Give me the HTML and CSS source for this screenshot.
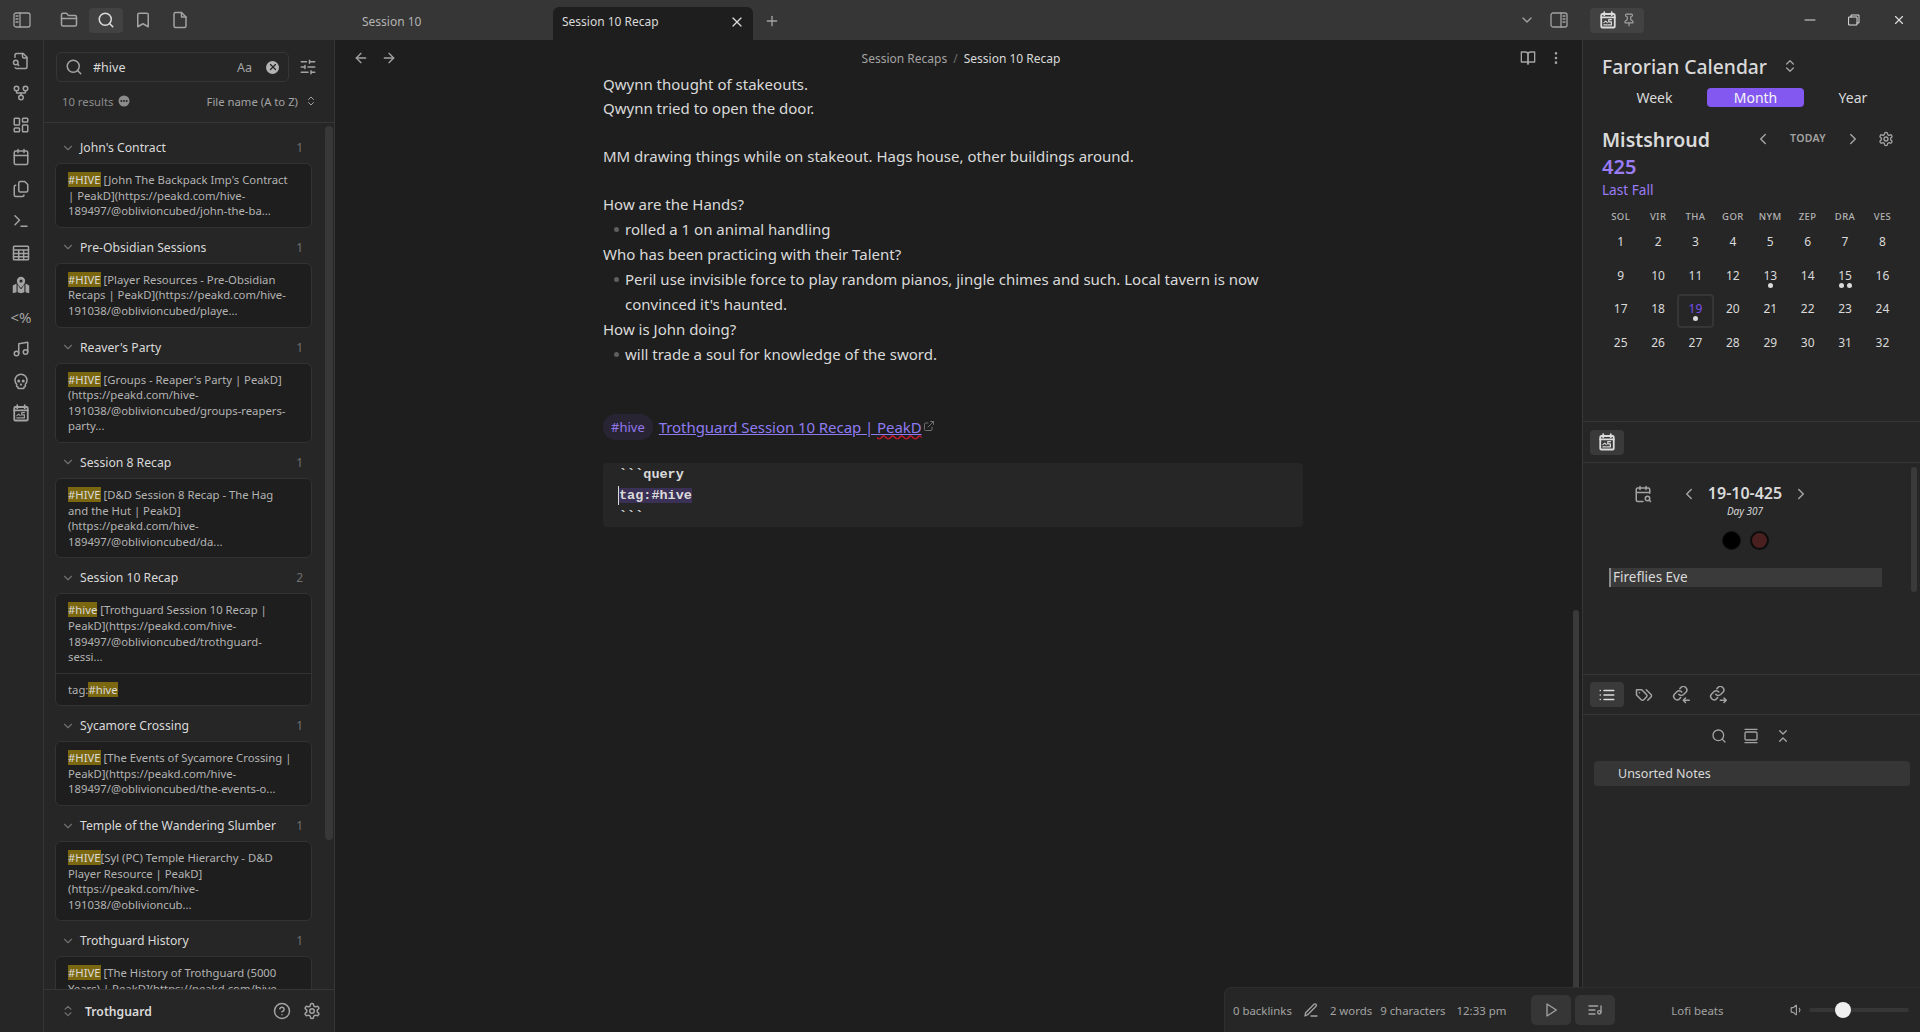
FILE: index.html
```html
<!DOCTYPE html>
<html lang="en">
<head>
<meta charset="utf-8">
<title>Session 10 Recap - Trothguard</title>
<link rel="stylesheet" href="styles.css">
</head>
<body>
<svg class="defs" aria-hidden="true">
  <symbol id="i-side-left" viewBox="0 0 18 18"><rect x="1" y="2" width="16" height="14" rx="2"/><path d="M7 2v14M3 5h2M3 8h2M3 11h2"/></symbol>
  <symbol id="i-side-right" viewBox="0 0 18 18"><rect x="1" y="2" width="16" height="14" rx="2"/><path d="M11 2v14M13 5h2M13 8h2M13 11h2"/></symbol>
  <symbol id="i-folder" viewBox="0 0 24 24"><path d="M20 20a2 2 0 0 0 2-2V8a2 2 0 0 0-2-2h-7.9a2 2 0 0 1-1.69-.9L9.6 3.9A2 2 0 0 0 7.93 3H4a2 2 0 0 0-2 2v13a2 2 0 0 0 2 2Z"/><path d="M2 10h20"/></symbol>
  <symbol id="i-search" viewBox="0 0 24 24"><circle cx="11" cy="11" r="8"/><path d="m21 21-4.3-4.3"/></symbol>
  <symbol id="i-bookmark" viewBox="0 0 24 24"><path d="m19 21-7-4-7 4V5a2 2 0 0 1 2-2h10a2 2 0 0 1 2 2v16z"/></symbol>
  <symbol id="i-file" viewBox="0 0 24 24"><path d="M14 2H6a2 2 0 0 0-2 2v16a2 2 0 0 0 2 2h12a2 2 0 0 0 2-2V8z"/><path d="M14 2v6h6"/></symbol>
  <symbol id="i-file-search" viewBox="0 0 24 24"><path d="M14 2v4a2 2 0 0 0 2 2h4"/><path d="M4.3 21a2 2 0 0 0 1.7 1H18a2 2 0 0 0 2-2V7l-5-5H6a2 2 0 0 0-2 2v3"/><path d="m9 18-1.5-1.5"/><circle cx="5" cy="14" r="3"/></symbol>
  <symbol id="i-fork" viewBox="0 0 24 24"><circle cx="12" cy="18" r="3"/><circle cx="6" cy="6" r="3"/><circle cx="18" cy="6" r="3"/><path d="M18 9v2c0 .6-.4 1-1 1H7c-.6 0-1-.4-1-1V9"/><path d="M12 12v3"/></symbol>
  <symbol id="i-dash" viewBox="0 0 24 24"><rect x="3" y="3" width="7" height="9" rx="1"/><rect x="14" y="3" width="7" height="5" rx="1"/><rect x="14" y="12" width="7" height="9" rx="1"/><rect x="3" y="16" width="7" height="5" rx="1"/></symbol>
  <symbol id="i-calendar" viewBox="0 0 24 24"><path d="M8 2v4M16 2v4"/><rect x="3" y="4" width="18" height="18" rx="2"/><path d="M3 10h18"/></symbol>
  <symbol id="i-copy" viewBox="0 0 24 24"><path d="M9 4a2 2 0 0 1 2-2h6l4 4v8a2 2 0 0 1-2 2h-8a2 2 0 0 1-2-2Z"/><path d="M5 7a2 2 0 0 0-2 2v11a2 2 0 0 0 2 2h9a2 2 0 0 0 2-2"/></symbol>
  <symbol id="i-terminal" viewBox="0 0 24 24"><path d="m4 17 6-6-6-6"/><path d="M12 19h8"/></symbol>
  <symbol id="i-table" viewBox="0 0 24 24"><rect x="2" y="3" width="20" height="18" rx="1"/><path d="M2 8h20M2 12.500h20M2 17h20M9 8v13M15.500 8v13"/></symbol>
  <symbol id="i-map" viewBox="0 0 24 24"><path class="solid" d="M1 12.500l5-2.500v11.500l-5 1.500zM7.500 11l3.500 6h2l3.500-6 0 10.500-4.500 1.500-4.500-1.500zM18 10l5 2.500V23l-5-1.500z"/><path class="solid" fill-rule="evenodd" d="M12 1a5.500 5.500 0 0 1 5.500 5.500c0 3-2.500 6-5.500 9.500-3-3.500-5.500-6.500-5.500-9.500A5.500 5.500 0 0 1 12 1zm0 3.500a2 2 0 1 0 0 4 2 2 0 0 0 0-4z"/></symbol>
  <symbol id="i-music" viewBox="0 0 24 24"><path d="M9 18V5l12-2v13"/><circle cx="6" cy="18" r="3"/><circle cx="18" cy="16" r="3"/></symbol>
  <symbol id="i-skull" viewBox="0 0 24 24"><path d="m12.500 17-.5-1-.5 1h1z"/><path d="M15 22a1 1 0 0 0 1-1v-1a2 2 0 0 0 1.560-3.250 8 8 0 1 0-11.120 0A2 2 0 0 0 8 20v1a1 1 0 0 0 1 1z"/><circle cx="15" cy="12" r="1"/><circle cx="9" cy="12" r="1"/></symbol>
  <symbol id="i-cal-s" viewBox="0 0 24 24"><path class="thick" d="M7 1.500v4M17 1.500v4"/><rect class="thick" x="3" y="4" width="18" height="18" rx="1.500"/><path class="thick" d="M3 8.500h18"/><path class="thin" d="M16.500 11.500h-3.500v3h3.500v4H12M6.500 15.500l2.500-2 2 2M6.500 18.500h4"/></symbol>
  <symbol id="i-sliders" viewBox="0 0 24 24"><path d="M21 5h-7M10 5H3M21 12h-9M8 12H3M21 19h-5M12 19H3M14 3v4M8 10v4M16 17v4"/></symbol>
  <symbol id="i-updown" viewBox="0 0 24 24"><path d="m7 15 5 5 5-5"/><path d="m7 9 5-5 5 5"/></symbol>
  <symbol id="i-down" viewBox="0 0 24 24"><path d="m6 9 6 6 6-6"/></symbol>
  <symbol id="i-left" viewBox="0 0 24 24"><path d="m15 18-6-6 6-6"/></symbol>
  <symbol id="i-right" viewBox="0 0 24 24"><path d="m9 18 6-6-6-6"/></symbol>
  <symbol id="i-arrow-left" viewBox="0 0 24 24"><path d="m12 19-7-7 7-7"/><path d="M19 12H5"/></symbol>
  <symbol id="i-arrow-right" viewBox="0 0 24 24"><path d="M5 12h14"/><path d="m12 5 7 7-7 7"/></symbol>
  <symbol id="i-x" viewBox="0 0 24 24"><path d="M18 6 6 18"/><path d="m6 6 12 12"/></symbol>
  <symbol id="i-plus" viewBox="0 0 24 24"><path d="M5 12h14"/><path d="M12 5v14"/></symbol>
  <symbol id="i-gear" viewBox="0 0 24 24"><path d="M12.220 2h-.44a2 2 0 0 0-2 2v.18a2 2 0 0 1-1 1.730l-.43.25a2 2 0 0 1-2 0l-.15-.08a2 2 0 0 0-2.730.73l-.22.38a2 2 0 0 0 .73 2.730l.15.1a2 2 0 0 1 1 1.720v.51a2 2 0 0 1-1 1.740l-.15.09a2 2 0 0 0-.73 2.730l.22.38a2 2 0 0 0 2.730.73l.15-.08a2 2 0 0 1 2 0l.43.25a2 2 0 0 1 1 1.730V20a2 2 0 0 0 2 2h.44a2 2 0 0 0 2-2v-.18a2 2 0 0 1 1-1.730l.43-.25a2 2 0 0 1 2 0l.15.08a2 2 0 0 0 2.730-.73l.22-.39a2 2 0 0 0-.73-2.730l-.15-.08a2 2 0 0 1-1-1.740v-.5a2 2 0 0 1 1-1.740l.15-.09a2 2 0 0 0 .73-2.730l-.22-.38a2 2 0 0 0-2.730-.73l-.15.08a2 2 0 0 1-2 0l-.43-.25a2 2 0 0 1-1-1.730V4a2 2 0 0 0-2-2z"/><circle cx="12" cy="12" r="3"/></symbol>
  <symbol id="i-help" viewBox="0 0 24 24"><circle cx="12" cy="12" r="10"/><path d="M9.090 9a3 3 0 0 1 5.830 1c0 2-3 3-3 3"/><path d="M12 17h.01"/></symbol>
  <symbol id="i-book" viewBox="0 0 24 24"><path d="M2 3h6a4 4 0 0 1 4 4v14a3 3 0 0 0-3-3H2z"/><path d="M22 3h-6a4 4 0 0 0-4 4v14a3 3 0 0 1 3-3h7z"/></symbol>
  <symbol id="i-more" viewBox="0 0 24 24"><circle cx="12" cy="12" r="1"/><circle cx="12" cy="5" r="1"/><circle cx="12" cy="19" r="1"/></symbol>
  <symbol id="i-pin" viewBox="0 0 24 24"><path d="M12 17v5"/><path d="M9 10.760a2 2 0 0 1-1.110 1.790l-1.780.9A2 2 0 0 0 5 15.240V16a1 1 0 0 0 1 1h12a1 1 0 0 0 1-1v-.76a2 2 0 0 0-1.110-1.790l-1.780-.9A2 2 0 0 1 15 10.760V7a1 1 0 0 1 1-1 2 2 0 0 0 0-4H8a2 2 0 0 0 0 4 1 1 0 0 1 1 1z"/></symbol>
  <symbol id="i-external" viewBox="0 0 24 24"><path d="M18 14v5a2 2 0 0 1-2 2H5a2 2 0 0 1-2-2V8a2 2 0 0 1 2-2h5"/><path d="M15 3h6v6"/><path d="M10 14 21 3"/></symbol>
  <symbol id="i-cal-search" viewBox="0 0 24 24"><path d="M8 2v4M16 2v4M21 11V6a2 2 0 0 0-2-2H5a2 2 0 0 0-2 2v14a2 2 0 0 0 2 2h7M3 10h18"/><circle cx="18" cy="18" r="3"/><path d="m22 22-1.800-1.800"/></symbol>
  <symbol id="i-list" viewBox="0 0 24 24"><path d="M8 6h13M8 12h13M8 18h13M3 6h.01M3 12h.01M3 18h.01"/></symbol>
  <symbol id="i-tags" viewBox="0 0 24 24"><path d="M9 5H2v7l6.290 6.290c.94.94 2.480.94 3.420 0l3.580-3.580c.94-.94.94-2.480 0-3.420L9 5Z"/><path d="M6 9.010V9"/><path d="m15 5 6.300 6.300a2.400 2.400 0 0 1 0 3.400L17 19"/></symbol>
  <symbol id="i-link-in" viewBox="0 0 24 24"><path d="M9 11a4.500 4.500 0 0 0 6.500.4l3-3a4.600 4.600 0 0 0-6.500-6.500L10.500 3.500"/><path d="M13 8a4.500 4.500 0 0 0-6.500-.4l-3 3a4.600 4.600 0 0 0 6.500 6.500L11.500 15.500"/><path d="M23 19h-8M18 16l-3 3 3 3"/></symbol>
  <symbol id="i-link-out" viewBox="0 0 24 24"><path d="M9 11a4.500 4.500 0 0 0 6.500.4l3-3a4.600 4.600 0 0 0-6.500-6.500L10.500 3.500"/><path d="M13 8a4.500 4.500 0 0 0-6.500-.4l-3 3a4.600 4.600 0 0 0 6.500 6.500L11.500 15.500"/><path d="M15 19h8M20 16l3 3-3 3"/></symbol>
  <symbol id="i-gallery" viewBox="0 0 24 24"><rect x="3" y="6" width="18" height="12" rx="2"/><path d="M3 2h18M3 22h18"/></symbol>
  <symbol id="i-collapse" viewBox="0 0 24 24"><path d="m7 20 5-5 5 5"/><path d="m7 4 5 5 5-5"/></symbol>
  <symbol id="i-pen" viewBox="0 0 24 24"><path d="M12 21h9"/><path d="M16.500 3.500a2.120 2.120 0 0 1 3 3L7 19l-4 2 1-5Z"/></symbol>
  <symbol id="i-play" viewBox="0 0 24 24"><polygon points="6 3 20 12 6 21 6 3"/></symbol>
  <symbol id="i-list-music" viewBox="0 0 24 24"><path d="M21 15V6"/><circle cx="18.500" cy="15.500" r="2.500"/><path d="M12 12H3M16 6H3M12 18H3"/></symbol>
  <symbol id="i-volume" viewBox="0 0 24 24"><path d="M11 4.700a.7.7 0 0 0-1.200-.5L6.400 7.600A1.400 1.400 0 0 1 5.400 8H3a1 1 0 0 0-1 1v6a1 1 0 0 0 1 1h2.400a1.400 1.400 0 0 1 1 .4l3.400 3.400a.7.7 0 0 0 1.200-.5z"/><path d="M16 9a5 5 0 0 1 0 6"/></symbol>
  <symbol id="i-min" viewBox="0 0 24 24"><path d="M2 12h20"/></symbol>
  <symbol id="i-restore" viewBox="0 0 12 12"><rect x="1" y="3" width="8" height="8"/><path d="M3 3V1h8v8H9"/></symbol>
  <symbol id="i-dots-badge" viewBox="0 0 12 12"><circle class="badge-fill" cx="6" cy="6" r="5.500"/><circle class="badge-dot" cx="3.300" cy="6" r="1"/><circle class="badge-dot" cx="6" cy="6" r="1"/><circle class="badge-dot" cx="8.700" cy="6" r="1"/></symbol>
</svg>

<header class="titlebar">
  <div class="tb-left">
    <button class="tb-btn tb-toggle"><svg class="ic ic18 fine"><use href="#i-side-left"/></svg></button>
    <div class="tb-tabs-left">
      <button class="tb-btn"><svg class="ic ic18"><use href="#i-folder"/></svg></button>
      <button class="tb-btn active"><svg class="ic ic18 bright"><use href="#i-search"/></svg></button>
      <button class="tb-btn"><svg class="ic ic18"><use href="#i-bookmark"/></svg></button>
      <button class="tb-btn"><svg class="ic ic18"><use href="#i-file"/></svg></button>
    </div>
  </div>
  <div class="tab-strip">
    <div class="tab">Session 10</div>
    <div class="tab current"><span class="tab-title">Session 10 Recap</span><svg class="ic ic16 bright"><use href="#i-x"/></svg></div>
    <svg class="ic ic16 tab-plus"><use href="#i-plus"/></svg>
  </div>
  <div class="tb-right">
    <svg class="ic ic16"><use href="#i-down"/></svg>
    <svg class="ic ic18 fine toggle-right"><use href="#i-side-right"/></svg>
    <div class="tb-pinned">
      <svg class="ic ic18 bright"><use href="#i-cal-s"/></svg>
      <svg class="ic ic14"><use href="#i-pin"/></svg>
    </div>
    <div class="win-controls">
      <svg class="ic ic12 bright"><use href="#i-min"/></svg>
      <svg class="ic ic12 bright hair"><use href="#i-restore"/></svg>
      <svg class="ic ic14 bright"><use href="#i-x"/></svg>
    </div>
  </div>
</header>

<div class="workspace">
  <nav class="ribbon">
    <svg class="ic ic18"><use href="#i-file-search"/></svg>
    <svg class="ic ic18"><use href="#i-fork"/></svg>
    <svg class="ic ic18"><use href="#i-dash"/></svg>
    <svg class="ic ic18"><use href="#i-calendar"/></svg>
    <svg class="ic ic18"><use href="#i-copy"/></svg>
    <svg class="ic ic18"><use href="#i-terminal"/></svg>
    <svg class="ic ic18"><use href="#i-table"/></svg>
    <svg class="ic ic18 map"><use href="#i-map"/></svg>
    <span class="ribbon-text">&lt;%</span>
    <svg class="ic ic18"><use href="#i-music"/></svg>
    <svg class="ic ic18"><use href="#i-skull"/></svg>
    <svg class="ic ic18"><use href="#i-cal-s"/></svg>
  </nav>

  <aside class="left-side">
    <div class="search-top">
      <div class="search-row">
        <div class="search-box">
          <svg class="ic ic18"><use href="#i-search"/></svg>
          <span class="search-value">#hive</span>
          <span class="search-aa">Aa</span>
          <span class="search-clear"><svg class="ic ic10"><use href="#i-x"/></svg></span>
        </div>
        <svg class="ic ic18"><use href="#i-sliders"/></svg>
      </div>
      <div class="result-info">
        <span class="result-count">10 results <svg class="badge"><use href="#i-dots-badge"/></svg></span>
        <span class="result-sort">File name (A to Z) <svg class="ic ic12"><use href="#i-updown"/></svg></span>
      </div>
    </div>
    <div class="results-wrap">
      <div class="results">
        <section class="group">
          <div class="group-head"><svg class="ic ic14 dim"><use href="#i-down"/></svg><span class="group-name">John's Contract</span><span class="group-num">1</span></div>
          <div class="card"><div class="match"><mark>#HIVE</mark> [John The Backpack Imp's Contract<br>| PeakD](https://peakd.com/hive-<br>189497/@oblivioncubed/john-the-ba...</div></div>
        </section>
        <section class="group">
          <div class="group-head"><svg class="ic ic14 dim"><use href="#i-down"/></svg><span class="group-name">Pre-Obsidian Sessions</span><span class="group-num">1</span></div>
          <div class="card"><div class="match"><mark>#HIVE</mark> [Player Resources - Pre-Obsidian<br>Recaps | PeakD](https://peakd.com/hive-<br>191038/@oblivioncubed/playe...</div></div>
        </section>
        <section class="group">
          <div class="group-head"><svg class="ic ic14 dim"><use href="#i-down"/></svg><span class="group-name">Reaver's Party</span><span class="group-num">1</span></div>
          <div class="card"><div class="match"><mark>#HIVE</mark> [Groups - Reaper's Party | PeakD]<br>(https://peakd.com/hive-<br>191038/@oblivioncubed/groups-reapers-<br>party...</div></div>
        </section>
        <section class="group">
          <div class="group-head"><svg class="ic ic14 dim"><use href="#i-down"/></svg><span class="group-name">Session 8 Recap</span><span class="group-num">1</span></div>
          <div class="card"><div class="match"><mark>#HIVE</mark> [D&amp;D Session 8 Recap - The Hag<br>and the Hut | PeakD]<br>(https://peakd.com/hive-<br>189497/@oblivioncubed/da...</div></div>
        </section>
        <section class="group">
          <div class="group-head"><svg class="ic ic14 dim"><use href="#i-down"/></svg><span class="group-name">Session 10 Recap</span><span class="group-num">2</span></div>
          <div class="card"><div class="match"><mark>#hive</mark> [Trothguard Session 10 Recap |<br>PeakD](https://peakd.com/hive-<br>189497/@oblivioncubed/trothguard-<br>sessi...</div><div class="match"><span>tag:</span><mark>#hive</mark></div></div>
        </section>
        <section class="group">
          <div class="group-head"><svg class="ic ic14 dim"><use href="#i-down"/></svg><span class="group-name">Sycamore Crossing</span><span class="group-num">1</span></div>
          <div class="card"><div class="match"><mark>#HIVE</mark> [The Events of Sycamore Crossing |<br>PeakD](https://peakd.com/hive-<br>189497/@oblivioncubed/the-events-o...</div></div>
        </section>
        <section class="group">
          <div class="group-head"><svg class="ic ic14 dim"><use href="#i-down"/></svg><span class="group-name">Temple of the Wandering Slumber</span><span class="group-num">1</span></div>
          <div class="card"><div class="match"><mark>#HIVE</mark>[Syl (PC) Temple Hierarchy - D&amp;D<br>Player Resource | PeakD]<br>(https://peakd.com/hive-<br>191038/@oblivioncub...</div></div>
        </section>
        <section class="group">
          <div class="group-head"><svg class="ic ic14 dim"><use href="#i-down"/></svg><span class="group-name">Trothguard History</span><span class="group-num">1</span></div>
          <div class="card"><div class="match"><mark>#HIVE</mark> [The History of Trothguard (5000<br>Years) | PeakD](https://peakd.com/hive-</div></div>
        </section>
      </div>
      <div class="scroll-thumb left-thumb"></div>
    </div>
    <footer class="vault">
      <svg class="ic ic14 dim"><use href="#i-updown"/></svg>
      <span class="vault-name">Trothguard</span>
      <svg class="ic ic18 vault-help"><use href="#i-help"/></svg>
      <svg class="ic ic18"><use href="#i-gear"/></svg>
    </footer>
  </aside>

  <main class="main">
    <div class="view-head">
      <div class="view-nav">
        <svg class="ic ic16"><use href="#i-arrow-left"/></svg>
        <svg class="ic ic16"><use href="#i-arrow-right"/></svg>
      </div>
      <div class="crumbs"><span>Session Recaps</span><span class="sep">/</span><span class="crumb-now">Session 10 Recap</span></div>
      <div class="view-actions">
        <svg class="ic ic16"><use href="#i-book"/></svg>
        <svg class="ic ic16"><use href="#i-more"/></svg>
      </div>
    </div>
    <article class="note">
      <p class="ln">Qwynn thought of stakeouts.</p>
      <p class="ln">Qwynn tried to open the door.</p>
      <p class="ln blank"></p>
      <p class="ln">MM drawing things while on stakeout. Hags house, other buildings around.</p>
      <p class="ln blank"></p>
      <div class="outline">
        <p>How are the Hands?</p>
        <p class="li">rolled a 1 on animal handling</p>
        <p>Who has been practicing with their Talent?</p>
        <p class="li">Peril use invisible force to play random pianos, jingle chimes and such. Local tavern is now<br>convinced it's haunted.</p>
        <p>How is John doing?</p>
        <p class="li">will trade a soul for knowledge of the sword.</p>
      </div>
      <div class="link-line">
        <span class="tag">#hive</span>
        <a class="ext-link">Trothguard Session 10 Recap | <span class="typo">PeakD</span></a><svg class="ic ic12 ext-icon"><use href="#i-external"/></svg>
      </div>
      <pre class="code"><span class="code-line">```query</span>
<span class="code-line"><span class="caret"></span><span class="sel">tag:#hive</span></span>
<span class="code-line">```</span></pre>
    </article>
    <div class="scroll-thumb main-thumb"></div>
  </main>

  <aside class="right-side">
    <section class="cal-pane">
      <div class="cal-title"><h1>Farorian Calendar</h1><svg class="ic ic16"><use href="#i-updown"/></svg></div>
      <div class="cal-modes"><span>Week</span><span class="on">Month</span><span>Year</span></div>
      <div class="cal-head">
        <div class="cal-month">
          <div class="month-name">Mistshroud</div>
          <div class="year">425</div>
          <div class="season">Last Fall</div>
        </div>
        <div class="cal-nav">
          <svg class="ic ic18"><use href="#i-left"/></svg>
          <span class="today">TODAY</span>
          <svg class="ic ic18"><use href="#i-right"/></svg>
          <svg class="ic ic16 cal-gear"><use href="#i-gear"/></svg>
        </div>
      </div>
      <div class="cal-grid">
        <span class="wd">SOL</span><span class="wd">VIR</span><span class="wd">THA</span><span class="wd">GOR</span><span class="wd">NYM</span><span class="wd">ZEP</span><span class="wd">DRA</span><span class="wd">VES</span>
        <span class="d">1</span><span class="d">2</span><span class="d">3</span><span class="d">4</span><span class="d">5</span><span class="d">6</span><span class="d">7</span><span class="d">8</span>
        <span class="d">9</span><span class="d">10</span><span class="d">11</span><span class="d">12</span><span class="d">13<i class="pips"><b></b></i></span><span class="d">14</span><span class="d">15<i class="pips"><b></b><b></b></i></span><span class="d">16</span>
        <span class="d">17</span><span class="d">18</span><span class="d now">19<i class="pips"><b></b></i></span><span class="d">20</span><span class="d">21</span><span class="d">22</span><span class="d">23</span><span class="d">24</span>
        <span class="d">25</span><span class="d">26</span><span class="d">27</span><span class="d">28</span><span class="d">29</span><span class="d">30</span><span class="d">31</span><span class="d">32</span>
      </div>
    </section>
    <div class="pane-tabs"><span class="pane-tab on"><svg class="ic ic18 bright"><use href="#i-cal-s"/></svg></span></div>
    <section class="day-pane">
      <div class="day-head">
        <svg class="ic ic18 day-search"><use href="#i-cal-search"/></svg>
        <svg class="ic ic18"><use href="#i-left"/></svg>
        <div class="day-title"><div class="day-date">19-10-425</div><div class="day-num">Day 307</div></div>
        <svg class="ic ic18"><use href="#i-right"/></svg>
      </div>
      <div class="moons"><span class="moon"></span><span class="moon red"></span></div>
      <div class="event">Fireflies Eve</div>
      <div class="scroll-thumb day-thumb"></div>
    </section>
    <div class="pane-tabs lower">
      <span class="pane-tab on"><svg class="ic ic18 bright"><use href="#i-list"/></svg></span>
      <span class="pane-tab"><svg class="ic ic18"><use href="#i-tags"/></svg></span>
      <span class="pane-tab"><svg class="ic ic18"><use href="#i-link-in"/></svg></span>
      <span class="pane-tab"><svg class="ic ic18"><use href="#i-link-out"/></svg></span>
    </div>
    <section class="outline-pane">
      <div class="outline-tools">
        <svg class="ic ic16"><use href="#i-search"/></svg>
        <svg class="ic ic16"><use href="#i-gallery"/></svg>
        <svg class="ic ic16"><use href="#i-collapse"/></svg>
      </div>
      <div class="outline-row">Unsorted Notes</div>
    </section>
  </aside>
</div>

<div class="status">
  <span>0 backlinks</span>
  <svg class="ic ic16 st-pen"><use href="#i-pen"/></svg>
  <span class="st-words">2 words</span>
  <span class="st-chars">9 characters</span>
  <span class="st-time">12:33 pm</span>
  <span class="st-btn st-first"><svg class="ic ic16"><use href="#i-play"/></svg></span>
  <span class="st-btn"><svg class="ic ic16"><use href="#i-list-music"/></svg></span>
  <span class="st-track">Lofi beats</span>
  <svg class="ic ic14 st-vol"><use href="#i-volume"/></svg>
  <span class="slider"><span class="knob"></span></span>
</div>
</body>
</html>
```

FILE: styles.css
```css
* { box-sizing: border-box; }
html, body { height: 100%; }
body {
  margin: 0;
  height: 1032px;
  overflow: hidden;
  display: flex;
  flex-direction: column;
  background: #1e1e1e;
  color: #dadada;
  font-family: "Noto Sans", "Open Sans", sans-serif;
  font-size: 15px;
  position: relative;
}
p { margin: 0; }
button { background: none; border: 0; padding: 0; }
.defs { position: absolute; width: 0; height: 0; }

.ic { fill: none; stroke: #a3a3a3; stroke-width: 2; stroke-linecap: round; stroke-linejoin: round; flex: none; display: block; }
.ic10 { width: 10px; height: 10px; }
.ic12 { width: 12px; height: 12px; }
.ic14 { width: 14px; height: 14px; }
.ic16 { width: 16px; height: 16px; }
.ic18 { width: 18px; height: 18px; }
.bright { stroke: #dcdcdc; }
.dim { stroke: #6f6f6f; }
.fine { stroke-width: 1.3; }
.hair { stroke-width: 1; }
.solid { fill: #a3a3a3; stroke: none; }
.thick { stroke-width: 2.4; }
.thin { stroke-width: 1.6; }
.badge { width: 12px; height: 12px; display: block; }
.badge-fill { fill: #8c8c8c; }
.badge-dot { fill: #262626; }

/* title bar */
.titlebar { height: 40px; flex: none; display: flex; background: #363636; }
.tb-left { width: 335px; flex: none; display: flex; align-items: center; }
.tb-btn { width: 34px; height: 25px; border-radius: 4px; display: flex; align-items: center; justify-content: center; }
.tb-btn.active { background: #424242; }
.tb-toggle { margin-left: 5px; }
.tb-tabs-left { display: flex; gap: 3px; margin-left: 13px; }
.tab-strip { flex: 1; display: flex; align-items: flex-end; padding-left: 18px; }
.tab { width: 200px; height: 33px; padding: 0 9px 4px; display: flex; align-items: center; font-size: 12px; color: #b3b3b3; border-radius: 6px 6px 0 0; }
.tab.current { background: #1e1e1e; color: #dadada; justify-content: space-between; padding-right: 8px; }
.tab.current .ic { stroke-width: 1.8; }
.tab-plus { margin: 0 0 11px 11px; }
.tb-right { display: flex; align-items: center; flex: none; }
.toggle-right { margin-left: 15px; }
.tb-pinned { width: 54px; height: 25px; background: #424242; border-radius: 4px; margin-left: 22px; display: flex; align-items: center; gap: 5px; padding-left: 9px; }
.win-controls { display: flex; align-items: center; width: 276px; padding-left: 160px; gap: 32px; }

.workspace { flex: 1; display: flex; min-height: 0; }

/* ribbon */
.ribbon { width: 44px; flex: none; background: #262626; border-right: 1px solid #363636; display: flex; flex-direction: column; align-items: center; padding-top: 12px; gap: 14px; padding-right: 1px; }
.ribbon-text { height: 18px; line-height: 18px; font-size: 15px; color: #a3a3a3; }

/* left side */
.left-side { width: 291px; flex: none; background: #262626; border-right: 1px solid #363636; display: flex; flex-direction: column; min-height: 0; }
.search-top { height: 83px; flex: none; border-bottom: 1px solid #363636; padding: 12px 0 0 12px; }
.search-row { display: flex; align-items: center; gap: 10px; }
.search-box { width: 233px; height: 30px; border: 1px solid #363636; border-radius: 5px; display: flex; align-items: center; padding: 0 9px 0 8px; background: #262626; }
.search-value { margin-left: 10px; flex: 1; font-size: 12.500px; color: #dadada; }
.search-aa { font-size: 12.500px; color: #a3a3a3; margin-right: 14px; }
.search-clear { width: 13px; height: 13px; border-radius: 50%; background: #b3b3b3; display: flex; align-items: center; justify-content: center; }
.search-clear .ic { stroke: #262626; stroke-width: 3; }
.result-info { display: flex; justify-content: space-between; align-items: center; margin-top: 10px; padding: 0 17px 0 6px; font-size: 11.300px; color: #a3a3a3; height: 18px; }
.result-count { display: flex; align-items: center; gap: 5px; color: #8c8c8c; }
.result-sort { display: flex; align-items: center; gap: 7px; }

.results-wrap { flex: 1; min-height: 0; position: relative; overflow: hidden; }
.results { padding: 5px 0 0 11px; width: 290px; }
.group-head { height: 35px; padding: 4px 31px 0 6px; display: flex; align-items: center; font-size: 12.200px; color: #dadada; }
.group-name { margin-left: 5px; flex: 1; white-space: nowrap; }
.group-num { color: #6f6f6f; font-size: 12px; }
.card { width: 257px; background: #1e1e1e; border: 1px solid #333; border-radius: 6px; }
.match { padding: 8px 12px; font-size: 11.300px; line-height: 15.600px; color: #b3b3b3; white-space: nowrap; }
.match + .match { border-top: 1px solid #333; }
mark { background: #7a6710; color: #dadada; }

.scroll-thumb { position: absolute; background: #3a3a3a; border-radius: 4px; }
.left-thumb { left: 281px; top: 3px; width: 8px; height: 714px; background: #383838; }

.vault { height: 43px; flex: none; border-top: 1px solid #363636; display: flex; align-items: center; padding: 0 13px 0 17px; background: #262626; position: relative; }
.vault-name { margin-left: 10px; flex: 1; font-size: 12.200px; font-weight: 600; color: #dadada; }
.vault-help { margin-right: 12px; }

/* main */
.main { flex: 1; min-width: 0; position: relative; background: #1e1e1e; }
.view-head { height: 36px; display: flex; align-items: center; padding: 0 15px 0 18px; position: relative; }
.view-nav { display: flex; gap: 12px; }
.crumbs { flex: 1; display: flex; justify-content: center; gap: 6px; font-size: 12px; color: #a3a3a3; padding-left: 5px; }
.sep { color: #6f6f6f; }
.crumb-now { color: #dadada; }
.view-actions { display: flex; gap: 12px; }
.note { width: 700px; margin-left: 268px; font-size: 15px; margin-top: -4px; color: #dadada; }
.ln { height: 24px; line-height: 24px; white-space: nowrap; }
.outline p { line-height: 25px; white-space: nowrap; }
.outline .li { padding-left: 22px; position: relative; }
.outline .li::before { content: ""; position: absolute; left: 11px; top: 10px; width: 5px; height: 5px; border-radius: 50%; background: #5e5e5e; }
.link-line { display: flex; align-items: center; height: 26px; margin-top: 47px; }
.tag { height: 26px; line-height: 26px; padding: 0 8px; border-radius: 13px; background: #292433; color: #9277ee; font-size: 13px; }
.ext-link { margin-left: 6px; color: #8e7bf1; text-decoration: underline; white-space: pre; letter-spacing: -.06px; }
.typo { text-decoration: underline wavy #c2182b; }
.ext-icon { stroke: #6f6f6f; margin-left: 1px; margin-top: -3px; }
.code { margin: 23px 0 0; height: 64px; padding: 1px 16px 0; background: #262626; border-radius: 4px; font-family: "Liberation Mono", monospace; font-weight: 700; font-size: 13.500px; line-height: 21px; color: #dadada; }
.code-line { position: relative; }
.sel { background: #3b3055; }
.caret { position: absolute; left: -1px; top: -2px; width: 1px; height: 19px; background: #dadada; }
.main-thumb { left: 1238px; top: 570px; width: 6px; height: 380px; }

/* right side */
.right-side { width: 338px; flex: none; background: #262626; border-left: 1px solid #363636; margin-left: 3px; display: flex; flex-direction: column; min-height: 0; position: relative; }
.cal-pane { height: 382px; flex: none; padding: 12px 19px 0 19px; border-bottom: 1px solid #363636; }
.cal-title { display: flex; align-items: center; gap: 15px; height: 28px; }
.cal-title h1 { margin: 0; font-size: 19.300px; font-weight: 500; color: #dadada; }
.cal-modes { display: grid; grid-template-columns: 95px 97px 88px; gap: 5px; margin: 8px 0 0 5px; text-align: center; font-size: 14px; line-height: 19px; }
.cal-modes .on { background: #8358f0; border-radius: 4px; color: #f4f4f4; }
.cal-head { display: flex; justify-content: space-between; margin-top: 19px; }
.month-name { font-size: 19.500px; font-weight: 600; line-height: 27px; color: #dadada; }
.year { font-size: 20px; font-weight: 600; line-height: 27px; color: #9a7cf5; }
.season { font-size: 13.600px; line-height: 19px; color: #9a7cf5; }
.cal-nav { display: flex; align-items: center; height: 26px; }
.today { width: 72px; text-align: center; font-size: 10.500px; font-weight: 600; color: #a3a3a3; letter-spacing: .3px; margin-top: -2px; }
.cal-gear { margin-left: 16px; margin-right: 7px; }
.cal-grid { display: grid; grid-template-columns: repeat(8, 37.400px); margin-top: 8px; }
.wd { height: 20px; line-height: 20px; text-align: center; font-size: 9.500px; font-weight: 500; color: #b3b3b3; letter-spacing: .4px; }
.d { height: 33.700px; padding-top: 4px; line-height: 17px; text-align: center; font-size: 12px; position: relative; border: 2px solid transparent; border-radius: 4px; color: #dadada; }
.d.now { border-color: #363636; color: #7a4ff0; }
.pips { display: flex; gap: 3px; justify-content: center; position: absolute; left: 0; right: 0; top: 20px; }
.pips b { width: 5px; height: 5px; border-radius: 50%; background: #dadada; }

.pane-tabs { height: 40px; flex: none; display: flex; align-items: center; padding-left: 7px; gap: 3px; }
.pane-tab { width: 34px; height: 25px; border-radius: 4px; display: flex; align-items: center; justify-content: center; }
.pane-tab.on { background: #3a3a3a; }
.day-pane { height: 212px; flex: none; border-top: 1px solid #363636; position: relative; }
.day-head { display: flex; align-items: flex-start; padding: 20px 0 0 51px; }
.day-head .ic { margin-top: 2px; }
.day-search { margin-right: 28px; }
.day-title { width: 94px; text-align: center; }
.day-date { font-size: 16px; font-weight: 600; line-height: 21px; color: #dadada; }
.day-num { font-size: 10px; font-style: italic; line-height: 15px; color: #dadada; }
.moons { display: flex; justify-content: center; gap: 9px; margin-top: 12px; padding-right: 12px; }
.moon { width: 19px; height: 19px; border-radius: 50%; background: #000; border: 1px solid #111; }
.moon.red { background: #4a1f1f; border: 2px solid #0c0c0c; }
.event { margin: 18px 0 0 26px; width: 273px; height: 19px; line-height: 19px; background: #3a3a3a; border-left: 2px solid #8a8a8a; padding-left: 2px; font-size: 13.500px; color: #dadada; }
.day-thumb { left: 328px; top: 4px; width: 6px; height: 125px; }
.pane-tabs.lower { border-top: 1px solid #363636; border-bottom: 1px solid #363636; height: 41px; }
.outline-pane { flex: 1; padding: 0 10px 0 11px; }
.outline-tools { height: 42px; margin-bottom: 4px; display: flex; align-items: center; justify-content: center; gap: 16px; padding-right: 2px; }
.outline-row { height: 25px; line-height: 25px; background: #363636; border-radius: 4px; padding-left: 24px; font-size: 12.500px; color: #dadada; }

/* status bar */
.status { position: absolute; right: 0; bottom: 0; width: 696px; height: 45px; background: #262626; border-radius: 8px 0 0 0; border: 1px solid #2f2f2f; border-width: 1px 0 0 1px; display: flex; align-items: center; padding-left: 8px; font-size: 11.400px; color: #a3a3a3; white-space: nowrap; }
.st-pen { margin: 0 11px; }
.st-chars { margin-left: 8px; }
.st-time { margin-left: 11px; }
.st-btn { width: 40px; height: 30px; background: #363636; border-radius: 5px; display: flex; align-items: center; justify-content: center; margin-left: 4px; }
.st-first { margin-left: 25px; }
.st-track { margin-left: 56px; }
.st-vol { margin-left: 67px; }
.slider { width: 100px; height: 4px; border-radius: 2px; background: #363636; margin-left: 5px; position: relative; }
.knob { position: absolute; left: 26px; top: -6px; width: 16px; height: 16px; border-radius: 50%; background: #f0f0f0; }
```
